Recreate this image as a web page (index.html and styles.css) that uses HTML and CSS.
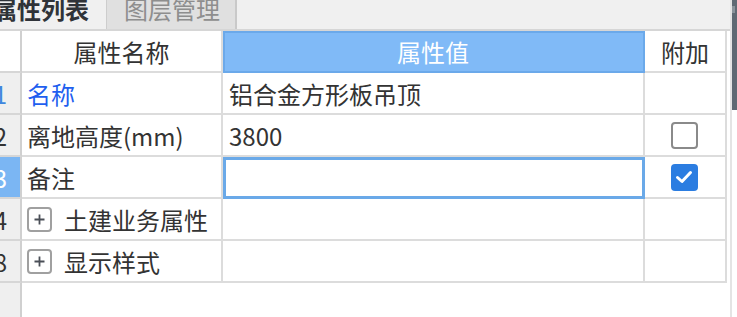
FILE: index.html
```html
<!DOCTYPE html>
<html lang="zh-CN">
<head>
<meta charset="utf-8">
<title>属性列表</title>
<link rel="stylesheet" href="styles.css">
</head>
<body>
<div class="panel">
  <div class="main">
    <div class="tabs">
      <div class="tab tab-active">属性列表</div>
      <div class="tab tab-idle">图层管理</div>
      <div class="tab-fill"></div>
    </div>
    <div class="grid-area">
      <div class="row row-head">
        <div class="cell num num-head"></div>
        <div class="cell head">属性名称</div>
        <div class="cell head head-value">属性值</div>
        <div class="cell head">附加</div>
      </div>
      <div class="row">
        <div class="cell num num-blue">1</div>
        <div class="cell name name-link">名称</div>
        <div class="cell value">铝合金方形板吊顶</div>
        <div class="cell add"></div>
      </div>
      <div class="row">
        <div class="cell num">2</div>
        <div class="cell name">离地高度(mm)</div>
        <div class="cell value">3800</div>
        <div class="cell add"><span class="check"></span></div>
      </div>
      <div class="row">
        <div class="cell num num-sel">3</div>
        <div class="cell name">备注</div>
        <div class="cell value value-sel"></div>
        <div class="cell add"><span class="check check-on"><svg viewBox="0 0 26 26" width="26" height="26"><path d="M6.5 13.5 L11 17.5 L19.5 8.5" fill="none" stroke="#fff" stroke-width="3" stroke-linecap="round" stroke-linejoin="round"/></svg></span></div>
      </div>
      <div class="row">
        <div class="cell num">4</div>
        <div class="cell name group"><span class="plus"><svg viewBox="0 0 21 21" width="21" height="21"><path d="M5.5 10.5 H15.5 M10.5 5.5 V15.5" stroke="#4a4f57" stroke-width="1.8" fill="none"/></svg></span><span class="group-label">土建业务属性</span></div>
        <div class="cell value"></div>
        <div class="cell add"></div>
      </div>
      <div class="row">
        <div class="cell num">8</div>
        <div class="cell name group"><span class="plus"><svg viewBox="0 0 21 21" width="21" height="21"><path d="M5.5 10.5 H15.5 M10.5 5.5 V15.5" stroke="#4a4f57" stroke-width="1.8" fill="none"/></svg></span><span class="group-label">显示样式</span></div>
        <div class="cell value"></div>
        <div class="cell add"></div>
      </div>
    </div>
  </div>
  <div class="scroll"><div class="thumb"><span class="thumb-mark"></span></div></div>
</div>
</body>
</html>
```

FILE: styles.css
```css
html, body {
  margin: 0;
  padding: 0;
  background: #ffffff;
  overflow: hidden;
}
body {
  width: 737px;
  height: 317px;
  font-family: "Noto Sans CJK SC", "Noto Sans", sans-serif;
  font-size: 24px;
  color: #333333;
}
.panel {
  display: flex;
  margin-left: -19px;
  width: 756px;
  height: 317px;
}
.main {
  width: 749px;
  display: flex;
  flex-direction: column;
}
.tabs {
  display: flex;
  height: 29px;
  background: #f0f0f0;
  border-bottom: 2px solid #d6d6d6;
}
.tab {
  box-sizing: border-box;
  height: 29px;
  line-height: 18px;
  padding-top: 0;
  white-space: nowrap;
  overflow: hidden;
}
.tab-active {
  width: 126px;
  padding-left: 12px;
  font-weight: bold;
  color: #2f3338;
  border-right: 1px solid #cdcdcd;
}
.tab-idle {
  width: 130px;
  padding-left: 17px;
  color: #8e8e8e;
  background: #e0e0e0;
  border-right: 2px solid #c9c9c9;
}
.tab-fill {
  flex: 1;
}
.grid-area {
  flex: 1;
  width: 746px;
  background: linear-gradient(to right, #efefef 39px, #d0d0d0 39px, #d0d0d0 41px, #ffffff 41px);
}
.row {
  display: grid;
  grid-template-columns: 41px 201px 422px 82px;
  height: 42px;
}
.cell {
  box-sizing: border-box;
  height: 42px;
  border-right: 2px solid #dcdcdc;
  border-bottom: 2px solid #dcdcdc;
  display: flex;
  align-items: center;
  white-space: nowrap;
  overflow: hidden;
  background: #ffffff;
}
.num {
  justify-content: center;
  background: #efefef;
  border-right-color: #d0d0d0;
  border-bottom-color: #d6d6d6;
  color: #333333;
}
.num-head {
  background: #ffffff;
}
.num-blue {
  color: #3f86de;
}
.num-sel {
  background: #7bb6f3;
  color: #ffffff;
}
.head {
  justify-content: center;
  color: #333333;
}
.head-value {
  background: #80baf7;
  color: #ffffff;
  border-right-color: #6ba9ea;
  border-bottom-color: #6ba9ea;
  box-shadow: inset 2px 2px 0 #6ba9ea;
}
.name {
  padding-left: 5px;
}
.name-link {
  color: #1f5fef;
}
.value {
  padding-left: 6px;
}
.value-sel {
  border-right: 2px solid #6aa9e8;
  border-bottom: 2px solid #6aa9e8;
  box-shadow: inset 3px 3px 0 #6aa9e8, inset -1px -1px 0 #6aa9e8;
}
.add {
  justify-content: center;
  padding-right: 1px;
}
.check {
  box-sizing: border-box;
  width: 27px;
  height: 27px;
  border: 2px solid #8a8a8a;
  border-radius: 4px;
  background: #ffffff;
  display: block;
}
.check-on {
  border: none;
  background: #2b7de1;
}
.check-on svg {
  display: block;
}
.group {
  padding-left: 5px;
}
.plus {
  box-sizing: border-box;
  width: 25px;
  height: 25px;
  border: 2px solid #a0a0a0;
  border-radius: 4px;
  display: flex;
  align-items: center;
  justify-content: center;
  margin-right: 12px;
  flex: none;
}
.plus svg {
  display: block;
  width: 21px;
  height: 21px;
}
.scroll {
  box-sizing: border-box;
  width: 7px;
  height: 317px;
  border-left: 2px solid #e4e4e4;
  background: #ffffff;
}
.thumb {
  position: relative;
  width: 5px;
  height: 110px;
  background: #5f6973;
}
.thumb-mark {
  position: absolute;
  left: 0;
  top: 6px;
  width: 3px;
  height: 7px;
  background: #8a939b;
}
```
